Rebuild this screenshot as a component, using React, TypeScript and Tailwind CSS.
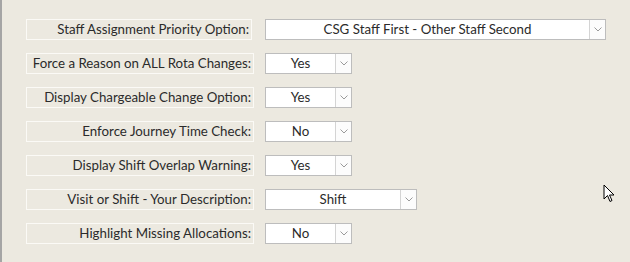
const rows = [
  { label: 'Staff Assignment Priority Option:', value: 'CSG Staff First - Other Staff Second', w: 'w-[341px]', lw: 'w-[226px]' },
  { label: 'Force a Reason on ALL Rota Changes:', value: 'Yes', w: 'w-[87px]', lw: 'w-[228px]' },
  { label: 'Display Chargeable Change Option:', value: 'Yes', w: 'w-[87px]', lw: 'w-[228px]' },
  { label: 'Enforce Journey Time Check:', value: 'No', w: 'w-[87px]', lw: 'w-[228px]' },
  { label: 'Display Shift Overlap Warning:', value: 'Yes', w: 'w-[87px]', lw: 'w-[228px]' },
  { label: 'Visit or Shift - Your Description:', value: 'Shift', w: 'w-[152px]', lw: 'w-[228px]' },
  { label: 'Highlight Missing Allocations:', value: 'No', w: 'w-[87px]', lw: 'w-[228px]' },
]

function Combo({ value, w }: { value: string; w: string }) {
  return (
    <div className={`${w} h-[21px] flex border border-[#bdbdbd] bg-white`}>
      <div className="flex-1 flex items-center justify-center text-[#2b2b2b]">{value}</div>
      <div className="w-[16px] border-l border-[#d4d4d4] bg-[#fcfcfc] flex items-center justify-center">
        <svg width="8" height="5" viewBox="0 0 8 5">
          <path d="M0.5 0.5 L4 4 L7.5 0.5" fill="none" stroke="#9a9a9a" strokeWidth="1" />
        </svg>
      </div>
    </div>
  )
}

export default function App() {
  return (
    <div
      className="relative w-[630px] h-[262px] bg-[#ece9e0] border-l-2 border-[#a5a5a5] text-[13.3px]"
      style={{ fontFamily: 'Lato, "Liberation Sans", sans-serif' }}
    >
      <div className="flex flex-col gap-[13px] pt-[19px] pl-[24px]">
        {rows.map((r) => (
          <div key={r.label} className="flex items-center">
            <div className="w-[239px]">
              <div className={`${r.lw} h-[21px] border border-[#fbfaf6] flex items-center justify-end pr-[2px] text-[#2b2b2b] whitespace-nowrap`}>
                {r.label}
              </div>
            </div>
            <Combo value={r.value} w={r.w} />
          </div>
        ))}
      </div>
      <svg className="absolute left-[601px] top-[184px]" width="13" height="20" viewBox="0 0 13 20">
        <path d="M1 1 L1 15 L4.5 11.5 L7 17.5 L9 16.5 L6.5 11 L11 11 Z" fill="#ffffff" stroke="#000000" strokeWidth="1" strokeLinejoin="miter" />
      </svg>
    </div>
  )
}
